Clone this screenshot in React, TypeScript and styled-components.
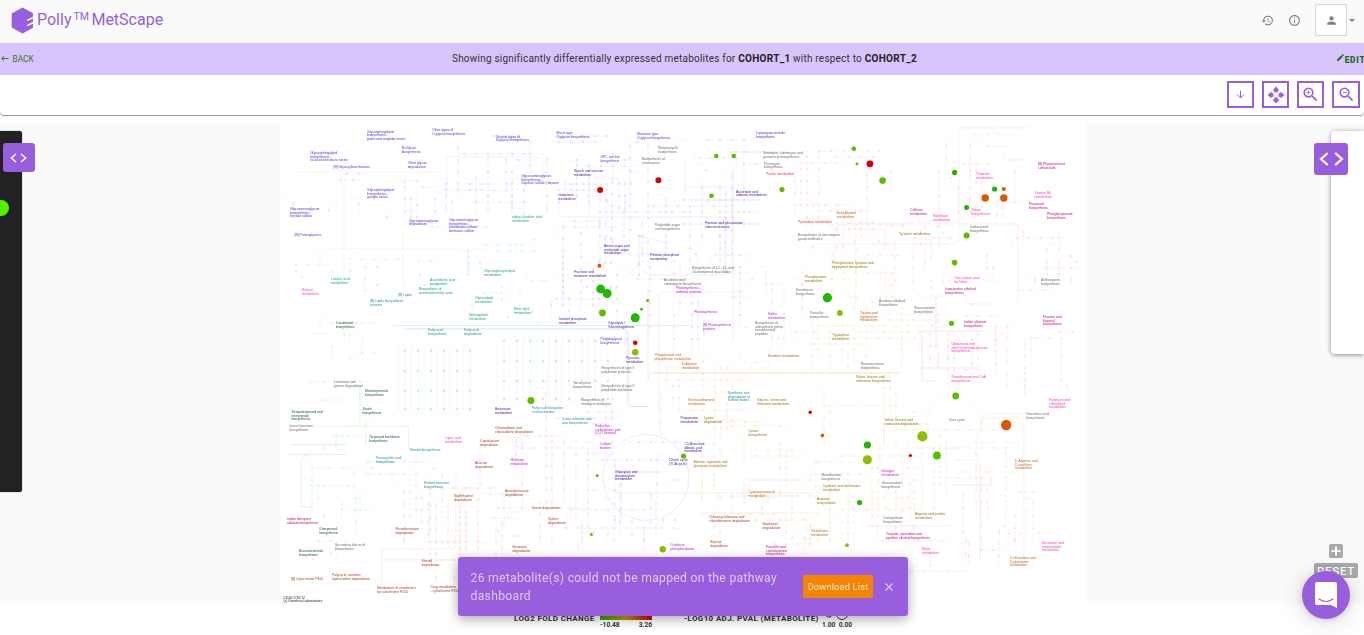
import React from 'react';
import styled, { createGlobalStyle } from 'styled-components';

const GlobalStyle = createGlobalStyle`
  * { box-sizing: border-box; }
  html, body { margin: 0; padding: 0; overflow: hidden; }
  body { font-family: Roboto, "Liberation Sans", sans-serif; background: #fff; color: #333; }
`;

const purple = '#985edd';

const Page = styled.div`
  position: relative;
  display: flex;
  flex-direction: column;
  width: 100%;
  height: 635px;
  overflow: hidden;
  background: #fff;
`;

const Header = styled.header`
  display: flex;
  align-items: center;
  height: 43px;
  padding: 0 9px 0 11px;
  background: #fafafa;
`;

const Brand = styled.div`
  display: flex;
  align-items: center;
  flex: 1;
  gap: 3px;
  padding-bottom: 2px;
  color: ${purple};
  font-size: 16px;
  line-height: 20px;
`;

const BrandName = styled.span`
  display: flex;
  align-items: flex-start;
  white-space: nowrap;
  padding-bottom: 1px;
`;

const TradeMark = styled.span`
  margin: 0 2.5px 0 2px;
  font-size: 10.5px;
  line-height: 13px;
`;

const HeaderActions = styled.div`
  display: flex;
  align-items: center;
  padding-bottom: 3px;
  color: #808080;
`;

const IconSlot = styled.span<{ $gap: number }>`
  display: flex;
  margin-right: ${(p) => p.$gap}px;
`;

const Avatar = styled.div`
  display: flex;
  align-items: center;
  justify-content: center;
  width: 32px;
  height: 32px;
  border: 1px solid #d8d8d8;
  background: #fff;
`;

const Caret = styled.span`
  margin-left: 2px;
  border: 3px solid transparent;
  border-top-color: #808080;
  border-bottom: 0;
`;

const Banner = styled.div`
  display: grid;
  grid-template-columns: 100px 1fr 95px;
  align-items: center;
  height: 32px;
  padding-bottom: 1px;
  background: #d7c4fa;
`;

const BannerLink = styled.span<{ $strong?: boolean }>`
  display: flex;
  align-items: ${(p) => (p.$strong ? 'flex-start' : 'center')};
  gap: ${(p) => (p.$strong ? 0 : 3.5)}px;
  justify-self: ${(p) => (p.$strong ? 'end' : 'start')};
  margin-right: ${(p) => (p.$strong ? -1.5 : 0)}px;
  color: ${(p) => (p.$strong ? '#1f6b1f' : '#2f7a30')};
  font-size: ${(p) => (p.$strong ? 8.3 : 8.3)}px;
  font-weight: ${(p) => (p.$strong ? 900 : 400)};
  letter-spacing: ${(p) => (p.$strong ? 0.8 : 0)}px;
`;

const EditLabel = styled.span`
  padding-top: 2px;
`;

const BannerText = styled.div`
  text-align: center;
  font-size: 10px;
  letter-spacing: 0.21px;
  color: #333;
  b { font-weight: 700; color: #222; letter-spacing: 0.3px; }
`;

const Toolbar = styled.div`
  display: flex;
  justify-content: flex-end;
  gap: 8px;
  height: 40px;
  padding: 6px 4px 0 0;
  background: #fff;
  border-radius: 0 0 4px 4px;
  box-shadow: 0 1px 1px rgba(0, 0, 0, 0.42);
`;

const ToolButton = styled.button`
  display: flex;
  align-items: center;
  justify-content: center;
  width: 27px;
  height: 27px;
  padding: 0;
  border: 2px solid ${purple};
  background: #fff;
  color: ${purple};
  &:last-child { width: 28px; }
`;

const Workspace = styled.main`
  display: flex;
  height: 480px;
  margin-top: 8px;
  padding-top: 8px;
  background: #fafafa;
`;

const MapPane = styled.div`
  width: 806px;
  height: 480px;
  margin: -8px 0 0 258px;
  background: #fff;
  svg { display: block; }
`;

const LeftPanel = styled.aside`
  position: relative;
  width: 22px;
  height: 361px;
  border-radius: 0 3px 3px 0;
  background: #222;
  box-shadow: 0 0 1px #000;
`;

const RightPanel = styled.aside`
  position: relative;
  width: 33px;
  height: 223px;
  margin-left: auto;
  border-radius: 4px 0 0 4px;
  background: #fff;
  box-shadow: 0 1px 5px rgba(0, 0, 0, 0.45);
`;

const PanelToggle = styled.button<{ $left: number; $w: number; $h: number }>`
  position: absolute;
  top: 12px;
  left: ${(p) => p.$left}px;
  display: flex;
  align-items: center;
  justify-content: center;
  width: ${(p) => p.$w}px;
  height: ${(p) => p.$h}px;
  padding: 0;
  border: 0;
  border-radius: 3px;
  background: ${purple};
  color: #fff;
`;

const SliderThumb = styled.span`
  position: absolute;
  top: 69px;
  left: -7px;
  width: 16px;
  height: 16px;
  border-radius: 50%;
  background: #55f000;
`;

const Legend = styled.footer`
  display: flex;
  align-items: flex-start;
  height: 32px;
  padding: 9px 0 0 514px;
  font-size: 8px;
  font-weight: 700;
  color: #333;
  letter-spacing: 0.36px;
  white-space: nowrap;
`;

const LegendTitle = styled.span<{ $w: number }>`
  width: ${(p) => p.$w}px;
  padding-top: 1px;
  line-height: 11px;
`;

const ScaleGroup = styled.div<{ $gap: number }>`
  width: 52px;
  margin-right: ${(p) => p.$gap}px;
`;

const GradientBar = styled.div`
  height: 8px;
  background: linear-gradient(90deg, #1fae00, #b8a000 50%, #d80000);
`;

const ScaleLabels = styled.div`
  display: flex;
  justify-content: space-between;
  margin-top: 1px;
  font-size: 6.6px;
  line-height: 9px;
  letter-spacing: 0;
`;

const SizeScale = styled.div`
  width: 30px;
  margin-left: 2px;
  svg { display: block; }
`;

const Toast = styled.div`
  position: absolute;
  left: 458px;
  top: 557px;
  display: flex;
  align-items: center;
  width: 450px;
  height: 59px;
  padding: 0 15px 0 12.5px;
  border-radius: 3px;
  background: ${purple};
  box-shadow: 0 3px 12px rgba(0, 0, 0, 0.35);
`;

const ToastText = styled.div`
  flex: 1;
  color: #ddccf6;
  font-size: 12.2px;
  line-height: 18px;
  letter-spacing: 0.28px;
`;

const DownloadButton = styled.button`
  width: 70px;
  height: 23px;
  margin-right: 12px;
  padding: 0;
  border: 0;
  background: #f58400;
  color: #fbeedd;
  font: 400 9.2px Roboto, sans-serif;
  letter-spacing: 0.2px;
`;

const MapControls = styled.div`
  position: absolute;
  top: 544px;
  right: 6px;
  display: flex;
  flex-direction: column;
  align-items: center;
  gap: 5px;
`;

const ZoomIn = styled.span`
  display: flex;
  width: 14px;
  height: 14px;
  border-radius: 2px;
  background: #a9a9a9;
`;

const ResetButton = styled.span`
  width: 44px;
  height: 15px;
  border-radius: 2px;
  background: #a9a9a9;
  color: #fff;
  font: 500 11.5px/16px Roboto, sans-serif;
  letter-spacing: 0.7px;
  text-align: center;
`;

const ChatButton = styled.button`
  position: absolute;
  left: 1302px;
  top: 571px;
  width: 48px;
  height: 48px;
  padding: 0;
  border: 0;
  border-radius: 50%;
  background: ${purple};
  box-shadow: 0 1px 6px rgba(0, 0, 0, 0.12), 0 2px 24px rgba(0, 0, 0, 0.16);
  svg { display: block; }
`;

const MapText = styled.text`
  font-family: "Liberation Sans", Arial, sans-serif;
  font-size: 3.4px;
`;

/* ---- pathway map data ---- */

const tone = {
  v: '#5a30d8', p: '#48149c', y: '#707070', g: '#1fa873', t: '#1f97a0', d: '#1c5730',
  b: '#a84426', o: '#c4691c', k: '#9a7418', f: '#f93fae', m: '#bb22d4', h: '#c2146f', r: '#f52f42', n: '#222222',
};
type Tone = keyof typeof tone;
type Label = [number, number, Tone, string];

const labels: Label[] = [
  [367, 131.7, 'v', 'Glycosphingolipid|biosynthesis -|globo and isoglobo series'],
  [432, 130, 'v', 'Other types of|O-glycan biosynthesis'],
  [401.7, 148, 'v', 'N-Glycan|biosynthesis'],
  [496, 136.5, 'v', 'Various types of|N-glycan biosynthesis'],
  [310.5, 153, 'v', 'Glycosphingolipid|biosynthesis -|lacto and neolacto series'],
  [333.5, 166.7, 'v', '[B] Glycosyltransferases'],
  [407.7, 163, 'v', 'Other glycan|degradation'],
  [367, 190, 'v', 'Glycosphingolipid|biosynthesis -|ganglio series'],
  [521.5, 176, 'v', 'Glycosaminoglycan|biosynthesis -|heparan sulfate / heparin'],
  [290, 209, 'v', 'Glycosaminoglycan|biosynthesis -|keratan sulfate'],
  [409, 220.5, 'v', 'Glycosaminoglycan|degradation'],
  [449, 220, 'v', 'Glycosaminoglycan|biosynthesis -|chondroitin sulfate /|dermatan sulfate'],
  [294.5, 235, 'v', '[B] Proteoglycans'],
  [512, 216.8, 'g', 'alpha-Linolenic acid|metabolism'],
  [331, 279, 'g', 'Linoleic acid|metabolism'],
  [430, 280, 'g', 'Arachidonic acid|metabolism'],
  [484, 271, 'g', 'Glycerophospholipid|metabolism'],
  [556.3, 132.8, 'v', 'Mucin type|O-glycan biosynthesis'],
  [637, 133.8, 'v', 'Mannose type|O-glycan biosynthesis'],
  [756, 132.8, 'v', 'Lipopolysaccharide|biosynthesis'],
  [658, 148, 'y', 'Streptomycin|biosynthesis'],
  [600.5, 157, 'v', 'GPI - anchor|biosynthesis'],
  [642, 159, 'y', 'Biosynthesis of|ansamycins'],
  [763, 153, 'y', 'Neomycin, kanamycin and|gentamicin biosynthesis'],
  [764, 163.5, 'y', 'Puromycin|biosynthesis'],
  [574, 171, 'p', 'Starch and sucrose|metabolism'],
  [766, 173.7, 'r', 'Purine metabolism'],
  [558.3, 195, 'p', 'Galactose|metabolism'],
  [736, 191.7, 'p', 'Ascorbate and|aldarate metabolism'],
  [655, 225, 'y', 'Polyketide sugar|unit biosynthesis'],
  [705, 223, 'p', 'Pentose and glucuronate|interconversions'],
  [798, 222, 'r', 'Pyrimidine metabolism'],
  [798, 235, 'y', 'Biosynthesis of vancomycin|group antibiotics'],
  [604, 246, 'p', 'Amino sugar and|nucleotide sugar|metabolism'],
  [650, 255, 'p', 'Pentose phosphate|metabolism'],
  [692, 268, 'y', 'Biosynthesis of 12-, 14- and|16-membered macrolides'],
  [574, 272, 'p', 'Fructose and|mannose metabolism'],
  [664, 280, 'y', 'Acarbose and|validamycin biosynthesis'],
  [1038, 164, 'h', '[B] Phytochemical|compounds'],
  [976, 174, 'f', 'Thiamine|metabolism'],
  [1034.5, 193, 'f', 'Vitamin B6|metabolism'],
  [1029, 204, 'h', 'Flavonoid|biosynthesis'],
  [1047, 214, 'h', 'Phenylpropanoid|biosynthesis'],
  [971.5, 210, 'f', 'Folate|biosynthesis'],
  [910, 210, 'h', 'Caffeine|metabolism'],
  [933, 216, 'f', 'Riboflavin|metabolism'],
  [837, 213, 'o', 'beta-Alanine|metabolism'],
  [970, 227, 'y', 'Isoflavonoid|biosynthesis'],
  [899, 234, 'k', 'Tyrosine metabolism'],
  [832, 263, 'k', 'Phenylalanine, tyrosine and|tryptophan biosynthesis'],
  [805, 277, 'k', 'Phenylalanine|metabolism'],
  [954.5, 278, 'f', 'One carbon pool|by folate'],
  [1041, 280, 'y', 'Anthocyanin|biosynthesis'],
  [302, 290, 'f', 'Retinol|metabolism'],
  [398, 295, 't', '[B] Lipids'],
  [370, 301, 't', '[B] Lipids biosynthesis|proteins'],
  [418.7, 289, 'g', 'Biosynthesis of|unsaturated fatty acids'],
  [475, 298, 'g', 'Glycerolipid|metabolism'],
  [514, 309, 'g', 'Ether lipid|metabolism'],
  [469, 315, 'g', 'Sphingolipid|metabolism'],
  [336, 323, 'd', 'Carotenoid|biosynthesis'],
  [428, 330, 't', 'Fatty acid|biosynthesis'],
  [464, 330, 't', 'Fatty acid|degradation'],
  [334, 382, 'y', 'Limonene and|pinene degradation'],
  [365, 391, 'd', 'Monoterpenoid|biosynthesis'],
  [362.5, 409, 'd', 'Zeatin|biosynthesis'],
  [291.5, 412, 'd', 'Sesquiterpenoid and|triterpenoid|biosynthesis'],
  [289.5, 426, 'y', 'Insect hormone|biosynthesis'],
  [369, 437, 'd', 'Terpenoid backbone|biosynthesis'],
  [445, 438, 'f', 'Lipoic acid|metabolism'],
  [410, 450, 't', 'Steroid biosynthesis'],
  [495, 409, 'p', 'Butanoate|metabolism'],
  [532, 408, 't', 'Fatty acid elongation|in mitochondria'],
  [495, 428, 'b', 'Chloroalkane and|chloroalkene degradation'],
  [480, 441, 'b', 'Caprolactam|degradation'],
  [676, 288, 'm', 'Photosynthesis -|antenna proteins'],
  [796, 290, 'y', 'Novobiocin|biosynthesis'],
  [694, 312, 'm', 'Photosynthesis'],
  [768, 314, 'm', 'Sulfur|metabolism'],
  [703, 325, 'm', '[B] Photosynthesis|proteins'],
  [755, 323, 'y', 'Biosynthesis of|siderophore group|nonribosomal|peptides'],
  [559, 319, 'p', 'Inositol phosphate|metabolism'],
  [608, 323, 'p', 'Glycolysis /|Gluconeogenesis'],
  [600.5, 339, 'v', 'Peptidoglycan|biosynthesis'],
  [626, 358, 'p', 'Pyruvate|metabolism'],
  [654.5, 355, 'o', 'Phosphonate and|phosphinate metabolism'],
  [682, 364, 'o', 'D-Alanine|metabolism'],
  [601.5, 368, 'y', 'Biosynthesis of type II|polyketide products'],
  [573, 383, 'y', 'Tetracycline|biosynthesis'],
  [601.5, 386, 'y', 'Biosynthesis of type II|polyketide backbone'],
  [581.5, 400, 'y', 'Biosynthesis of|enediyne antibiotics'],
  [688, 400, 'o', 'Selenocompound|metabolism'],
  [728, 393, 't', 'Synthesis and|degradation of|Ketone bodies'],
  [757, 400, 'k', 'Glycine, serine and|threonine metabolism'],
  [768, 356, 'k', 'Histidine metabolism'],
  [562, 419, 't', 'Cutin, suberine and|wax biosynthesis'],
  [680.5, 418, 'p', 'Propanoate|metabolism'],
  [704, 418, 'k', 'Lysine|degradation'],
  [595, 426, 'm', 'Reductive|carboxylate cycle|(CO2 fixation)'],
  [748.5, 431, 'k', 'Lysine|biosynthesis'],
  [600, 444, 'm', 'Carbon|fixation'],
  [684.5, 444, 'p', 'C5-Branched|dibasic acid|metabolism'],
  [945, 289, 'h', 'Isoquinoline alkaloid|biosynthesis'],
  [879, 301, 'y', 'Acridone alkaloid|biosynthesis'],
  [914, 308, 'y', 'Staurosporine|biosynthesis'],
  [810, 313, 'y', 'Penicillin|biosynthesis'],
  [860, 313, 'o', 'Taurine and|hypotaurine|metabolism'],
  [964, 322, 'h', 'Indole alkaloid|biosynthesis'],
  [1043, 317, 'h', 'Flavone and|flavonol|biosynthesis'],
  [832, 335, 'k', 'Tryptophan|metabolism'],
  [951.5, 344, 'f', 'Ubiquinone and|other terpenoid-quinone|biosynthesis'],
  [861, 364, 'y', 'Benzoxazinone|biosynthesis'],
  [856, 377, 'k', 'Valine, leucine and|isoleucine biosynthesis'],
  [951.5, 377, 'f', 'Pantothenate and CoA|biosynthesis'],
  [1049, 400, 'f', 'Porphyrin and|chlorophyll|metabolism'],
  [884.5, 420, 'k', 'Valine, leucine and|isoleucine degradation'],
  [949, 420, 'y', 'Urea cycle'],
  [1026, 414, 'y', 'Clavulanic acid|biosynthesis'],
  [376, 458, 't', 'Primary bile acid|biosynthesis'],
  [424, 483, 't', 'Steroid hormone|biosynthesis'],
  [475, 463, 'b', 'Atrazine|degradation'],
  [510.5, 460, 'm', 'Methane|metabolism'],
  [505, 491, 'b', 'Aminobenzoate|degradation'],
  [454, 496, 'b', 'Naphthalene|degradation'],
  [532, 508, 'b', 'Dioxin degradation'],
  [287, 519, 'h', 'Indole diterpene|alkaloid biosynthesis'],
  [319.5, 529, 'd', 'Diterpenoid|biosynthesis'],
  [395.5, 529, 'b', 'Fluorobenzoate|degradation'],
  [335, 545, 'y', 'Secondary bile acid|biosynthesis'],
  [299, 551, 'd', 'Brassinosteroid|biosynthesis'],
  [512.5, 547, 'b', 'Benzoate|degradation'],
  [421.5, 561, 'b', 'Steroid|degradation'],
  [291, 579, 'b', '[B] Cytochrome P450'],
  [332, 575, 'b', 'Polycyclic aromatic|hydrocarbon degradation'],
  [377, 588, 'b', 'Metabolism of xenobiotics|by cytochrome P450'],
  [430.5, 587, 'b', 'Drug metabolism|- cytochrome P450'],
  [283.5, 597.5, 'n', '01100 7/10/12|(c) Kanehisa Laboratories'],
  [615, 472, 'p', 'Glyoxylate and|dicarboxylate|metabolism'],
  [669, 460, 'p', 'Citrate cycle|(TCA cycle)'],
  [693.5, 462, 'k', 'Alanine, aspartate and|glutamate metabolism'],
  [748.5, 492, 'o', 'Cyanoamino acid|metabolism'],
  [548, 519, 'b', 'Xylene|degradation'],
  [709, 517, 'b', 'Chlorocyclohexane and|chlorobenzene degradation'],
  [762.5, 524, 'b', 'Bisphenol|degradation'],
  [811, 531, 'o', 'Glutathione|metabolism'],
  [670.5, 545, 'm', 'Oxidative|phosphorylation'],
  [710, 542, 'b', 'Styrene|degradation'],
  [766, 547, 'h', 'Penicillin and|cephalosporin|biosynthesis'],
  [881.5, 471, 'm', 'Nitrogen|metabolism'],
  [821.5, 475, 'y', 'Monobactam|biosynthesis'],
  [881.5, 483, 'y', 'Glucosinolate|biosynthesis'],
  [823, 486, 'k', 'Cysteine and methionine|metabolism'],
  [817, 499, 'k', 'Arginine|biosynthesis'],
  [883, 518, 'y', 'Carbapenem|biosynthesis'],
  [915, 514, 'k', 'Arginine and proline|metabolism'],
  [886, 534, 'h', 'Tropane, piperidine and|pyridine alkaloid biosynthesis'],
  [922, 549, 'f', 'Biotin|metabolism'],
  [1015, 461, 'o', 'D-Arginine and|D-ornithine|metabolism'],
  [1042, 543, 'f', 'Nicotinate and|nicotinamide|metabolism'],
  [1010, 558, 'o', 'D-Glutamine and|D-glutamate|metabolism'],
];

/* measured metabolites: x, y, radius, fill */
const metabolites: [number, number, number, string][] = [
  [716.3, 156, 2.3, '#5bbd00'], [733.7, 156, 2.3, '#5bbd00'], [658.4, 180.3, 3, '#d80000'],
  [600.1, 190, 3, '#d80000'], [711.5, 195.8, 2.4, '#5bbd00'], [782, 189.5, 2.6, '#5bbd00'],
  [599.4, 265.8, 2, '#d85a00'], [853.8, 148.8, 2.3, '#5bbd00'], [857, 163.8, 1.6, '#8abf00'],
  [870, 163.8, 3.4, '#d80000'], [882.6, 180.6, 3.3, '#5bbd00'], [954.6, 172.4, 2.6, '#1fb800'],
  [994.6, 189, 2.6, '#1fb800'], [1003.8, 189, 2.1, '#d85a00'], [985.2, 198, 3.7, '#d85a00'],
  [1003.8, 198, 3.7, '#d85a00'], [966.6, 207.6, 2.5, '#1fb800'], [966.6, 235.6, 3, '#5bbd00'],
  [954.6, 262.6, 2.8, '#5bbd00'], [600.6, 289, 4.4, '#1fb800'], [607.1, 293.5, 4.5, '#1fb800'],
  [602.5, 313, 3.4, '#5bbd00'], [647.6, 300.6, 1.5, '#5bbd00'], [641.5, 309.3, 1.5, '#5bbd00'],
  [635.2, 317.7, 4.5, '#1fb800'], [635.2, 342.8, 2.3, '#d80000'], [635.2, 352.3, 3.2, '#8abf00'],
  [530.9, 400.4, 3.5, '#5bbd00'], [827.4, 297.7, 4.6, '#1fb800'], [839.9, 313, 2.9, '#8abf00'],
  [951.5, 323.3, 2.6, '#5bbd00'], [955.7, 396, 3.4, '#5bbd00'], [810.2, 412.2, 1.7, '#d80000'],
  [822.4, 435.4, 1.8, '#d85a00'], [922.4, 436.4, 5.1, '#8abf00'], [1006.2, 425, 5.2, '#d85a00'],
  [867.4, 445, 3.6, '#1fb800'], [867.4, 459.8, 4.5, '#8abf00'], [910.4, 455.5, 1.6, '#d80000'],
  [936.9, 455.5, 3.9, '#5bbd00'], [859.6, 502.5, 2.6, '#1fb800'], [683.5, 456, 2.6, '#5bbd00'],
  [597.2, 475.5, 1.5, '#5bbd00'], [591.4, 534.4, 1.6, '#8abf00'], [662.7, 549.2, 3.2, '#8abf00'],
  [847, 545.2, 1.9, '#8abf00'],
];

/* faint lattice regions: x, y, width, height, number of runs, colour */
const regions: [number, number, number, number, number, string][] = [
  [293, 150, 75, 70, 7, '#c9d0fb'], [375, 145, 65, 78, 8, '#c9d0fb'], [440, 130, 95, 85, 17, '#c9d0fb'],
  [535, 130, 105, 85, 20, '#ccd2fb'], [545, 215, 75, 105, 16, '#d3cdfb'], [600, 140, 160, 130, 30, '#d9c8f8'],
  [640, 128, 150, 40, 8, '#c9d0fb'], [290, 235, 130, 45, 8, '#bfeeda'], [420, 215, 120, 60, 12, '#bfeeda'],
  [460, 275, 90, 45, 9, '#bfeeda'], [365, 255, 80, 35, 7, '#bfe8ea'], [620, 255, 130, 100, 16, '#e4ccf7'],
  [765, 145, 120, 110, 20, '#fbcfd4'], [885, 160, 65, 90, 11, '#fbcde0'], [940, 128, 70, 90, 11, '#fbcde4'],
  [985, 160, 45, 60, 6, '#fbcde4'], [975, 220, 105, 65, 12, '#fac8dc'], [790, 225, 110, 80, 17, '#f8e6b8'],
  [895, 215, 60, 75, 11, '#fadadf'], [770, 290, 180, 85, 26, '#f9e4bb'], [930, 280, 70, 105, 15, '#facbe0'],
  [995, 290, 80, 105, 12, '#fad3e6'], [302, 305, 80, 55, 9, '#cbf0cb'], [300, 370, 80, 80, 12, '#cbf0cb'],
  [300, 450, 80, 70, 11, '#ccefce'], [295, 535, 50, 28, 4, '#c5f0c8'], [350, 450, 85, 95, 12, '#bfe8e6'],
  [400, 470, 120, 115, 24, '#f4cfc5'], [480, 430, 115, 115, 24, '#f2d0d8'], [540, 370, 90, 90, 11, '#e6d1f3'],
  [585, 430, 100, 95, 12, '#d8cdf6'], [655, 350, 115, 90, 19, '#f8dfc8'], [690, 420, 135, 85, 21, '#f9dfbd'],
  [690, 490, 130, 65, 14, '#f6cfc8'], [800, 370, 130, 80, 19, '#f9e4bb'], [800, 450, 120, 100, 23, '#f9e0b5'],
  [880, 430, 140, 90, 17, '#f9dfc8'], [945, 460, 60, 105, 9, '#facbe0'], [985, 480, 60, 70, 8, '#fad3e6'],
  [560, 480, 120, 70, 14, '#ead0f3'], [870, 535, 110, 40, 7, '#fad3d8'], [760, 260, 60, 90, 8, '#ecd2f5'],
];

const makeRandom = (seed: number) => {
  let s = seed;
  return () => {
    s = (s * 16807) % 2147483647;
    return s / 2147483647;
  };
};

const Lattice = () => {
  const rnd = makeRandom(4271);
  return (
    <g strokeWidth={0.5} fill="none">
      {regions.map(([x, y, w, h, n, color], i) => (
        <g key={i} stroke={color}>
          {Array.from({ length: n }, (_, j) => {
            const vertical = j % 5 < 3;
            const x0 = x + Math.round((rnd() * w * 0.95) / 6) * 6;
            const y0 = y + Math.round((rnd() * h * 0.9) / 6) * 6;
            const len = (vertical ? h : w) * (0.3 + rnd() * 0.55);
            const x1 = vertical ? x0 : Math.min(x + w, x0 + len);
            const y1 = vertical ? Math.min(y + h, y0 + len) : y0;
            const turn = rnd() > 0.45 ? (rnd() > 0.5 ? 10 : -10) : 0;
            const d = vertical
              ? `M${x0 + turn} ${y0}Q${x0} ${y0} ${x0} ${y0 + 4}V${y1}`
              : `M${x0} ${y0 + turn}Q${x0} ${y0} ${x0 + 4} ${y0}H${x1}`;
            const span = vertical ? y1 - y0 : x1 - x0;
            const count = Math.max(1, Math.floor(span / 12));
            return (
              <g key={j}>
                <path d={d} opacity={0.5} />
                {Array.from({ length: count }, (_, k) => (
                  <circle
                    key={k}
                    cx={vertical ? x0 : x0 + 6 + k * 12}
                    cy={vertical ? y0 + 6 + k * 12 : y0}
                    r={1.2}
                    fill={color}
                    stroke="none"
                    opacity={0.75}
                  />
                ))}
              </g>
            );
          })}
        </g>
      ))}
    </g>
  );
};

/* the fatty acid chains: evenly spaced looped columns */
const Chains = ({ x, y, n, step, bottom }: { x: number; y: number; n: number; step: number; bottom: number }) => (
  <g stroke="#bfe6e2" fill="none" strokeWidth={0.5}>
    {Array.from({ length: n }, (_, i) => {
      const cx = x + i * step;
      return (
        <g key={i}>
          <path d={`M${cx} ${bottom}V${y + 5}Q${cx} ${y} ${cx - 4} ${y}Q${cx - 7} ${y} ${cx - 7} ${y + 5}V${bottom - 5}Q${cx - 8} ${bottom} ${cx - 13} ${bottom}`} opacity={0.6} />
          {[6, 26, 46, 64].map((dy) => (
            <circle key={dy} cx={cx} cy={y + dy} r={1.2} fill="#b4e0dc" stroke="none" />
          ))}
        </g>
      );
    })}
  </g>
);

const PathwayMap = () => (
  <svg width="806" height="480" viewBox="280 123 806 480">
    <g opacity={0.66}>
      <Lattice />
      <Chains x={405} y={345} n={6} step={13} bottom={415} />
      <Chains x={504} y={335} n={9} step={13} bottom={404} />
    </g>
    <g fill="none" strokeWidth={0.6} opacity={0.75}>
      <path d="M393 325.500H690" stroke="#c4eadf" strokeWidth={0.8} />
      <path d="M405 329H622Q628 329 628 335V401Q628 406.500 633 406.500H648" stroke="#9ccfd8" />
      <path d="M648 381V378Q648 373 654 373H900" stroke="#f5d596" strokeWidth={0.9} />
      <path d="M648 285V375M659 430V296Q659 292 664 292H745M733 340V168M685 160V192Q685 187 690 187H725" stroke="#e3d5f5" />
      <path d="M639 236V275M639 236L668 243M628 275L639 264L648 275H725V216M561 217H726" stroke="#e0d2f5" />
      <path d="M447 157H535Q543 157 543 165V187M447 157V200" stroke="#e2e6fc" />
      <path d="M470 275V255Q470 249 476 249H485M324 249H460M403 230V285M344 160V280M293 172H440" stroke="#d8f3e8" />
      <circle cx={646} cy={477.500} r={43} stroke="#ddd6f8" strokeWidth={0.7} />
      <circle cx={954} cy={422} r={27} stroke="#f9ecd0" />
      <circle cx={517} cy={442} r={5} stroke="#efd0f3" />
      <path d="M290 444.500H346M289 454.500H346M330 334H311M360 426V385M320 426H408Q409 440 409 450" stroke="#c4ecc0" strokeWidth={0.7} />
      <path d="M301 507V461Q302 455 309 455M301 507H313" stroke="#f5c4da" />
      <path d="M605 486Q612 493 622 493H820M700 513H820" stroke="#f8e6c4" strokeWidth={0.8} />
      <path d="M834 262V232Q835 224 842 224H1018V300M815 244H950Q959 244 959 236V128H1030" stroke="#f8dce4" />
      <path d="M922 331H982M922 368H982M922 331V381H938M938 368V358" stroke="#f8c8dc" />
      <path d="M982 425Q983 418 990 418H1016Q1024 418 1024 426V570M955 460H975Q980 460 980 466V560" stroke="#f9dfc0" />
      <path d="M981 425Q982 414 990 414H1026" stroke="#e0e0e0" />
      <path d="M952 485H991V477M867 526H952" stroke="#f8c8d8" />
      <path d="M382 549H450Q456 549 456 543V470M382 549V585M382 560H455" stroke="#f7ddd4" />
    </g>
    {[236, 264, 275].map((y) => (
      <circle key={y} cx={639} cy={y} r={1.100} fill="#e2d3f5" />
    ))}
    {labels.map(([x, y, c, text], i) => (
      <MapText key={i} x={x} y={y + 1.2} fill={tone[c]}>
        {text.split('|').map((line, j) => (
          <tspan key={j} x={x} dy={j ? 3.5 : 0}>{line}</tspan>
        ))}
      </MapText>
    ))}
    {metabolites.map(([x, y, r, fill], i) => (
      <circle key={i} cx={x} cy={y} r={r} fill={fill} />
    ))}
  </svg>
);

/* ---- icons ---- */

const Logo = () => (
  <svg width="23" height="27" viewBox="0 0 23 27">
    <path d="M11.500 0.500L22 6.300V9.700L15.800 12.800L16.300 14L22 11.500V14.700L15.800 18L16.300 19.300L22 16.800V20.800L11.500 26.500L0.700 20.500V6.500Z" fill={purple} />
  </svg>
);

const MaterialIcon = ({ d, size }: { d: string; size: number }) => (
  <svg width={size} height={size} viewBox="0 0 24 24" fill="currentColor"><path d={d} /></svg>
);

const paths = {
  history: 'M13 3a9 9 0 0 0-9 9H1l3.890 3.890.070.140L9 12H6c0-3.870 3.130-7 7-7s7 3.130 7 7-3.130 7-7 7c-1.930 0-3.680-.790-4.940-2.060l-1.420 1.420A8.954 8.954 0 0 0 13 21a9 9 0 0 0 0-18zm-1 5v5l4.280 2.540.720-1.210-3.500-2.080V8H12z',
  info: 'M11 17h2v-6h-2v6zm1-15C6.480 2 2 6.480 2 12s4.480 10 10 10 10-4.480 10-10S17.520 2 12 2zm0 18c-4.410 0-8-3.590-8-8s3.590-8 8-8 8 3.590 8 8-3.590 8-8 8zM11 9h2V7h-2v2z',
  person: 'M12 12c2.210 0 4-1.790 4-4s-1.790-4-4-4-4 1.790-4 4 1.790 4 4 4zm0 2c-2.670 0-8 1.340-8 4v2h16v-2c0-2.660-5.330-4-8-4z',
  zoomIn: 'M15.500 14h-.790l-.280-.270A6.471 6.471 0 0 0 16 9.500 6.500 6.500 0 1 0 9.500 16c1.610 0 3.090-.590 4.230-1.570l.270.280v.790l5 4.990L20.490 19l-4.990-5zm-6 0C7.010 14 5 11.990 5 9.500S7.010 5 9.500 5 14 7.010 14 9.500 11.990 14 9.500 14zm2.500-4h-2v2H9v-2H7V9h2V7h1v2h2v1z',
  zoomOut: 'M15.500 14h-.790l-.280-.270A6.471 6.471 0 0 0 16 9.500 6.500 6.500 0 1 0 9.500 16c1.610 0 3.090-.590 4.230-1.570l.270.280v.790l5 4.990L20.490 19l-4.990-5zm-6 0C7.010 14 5 11.990 5 9.500S7.010 5 9.500 5 14 7.010 14 9.500 11.990 14 9.500 14zM7 9h5v1H7z',
  edit: 'M3 17.250V21h3.750L17.810 9.940l-3.750-3.750L3 17.250zM20.710 7.040a.996.996 0 0 0 0-1.410l-2.340-2.340a.996.996 0 0 0-1.410 0l-1.830 1.830 3.750 3.750 1.830-1.830z',
};

const Brackets = ({ w, h, stroke }: { w: number; h: number; stroke: number }) => (
  <svg width={w} height={h} viewBox={`0 0 ${w} ${h}`} fill="none" stroke="currentColor" strokeWidth={stroke}>
    <path d={`M${w * 0.35} 1L${w * 0.08} ${h / 2}L${w * 0.35} ${h - 1}M${w * 0.65} 1L${w * 0.92} ${h / 2}L${w * 0.65} ${h - 1}`} />
  </svg>
);

const App = () => (
  <Page>
    <GlobalStyle />
    <Header>
      <Brand>
        <Logo />
        <BrandName>Polly<TradeMark>TM</TradeMark>MetScape</BrandName>
      </Brand>
      <HeaderActions>
        <IconSlot $gap={14.5}><MaterialIcon d={paths.history} size={13} /></IconSlot>
        <IconSlot $gap={14}><MaterialIcon d={paths.info} size={13} /></IconSlot>
        <Avatar><MaterialIcon d={paths.person} size={13} /></Avatar>
        <Caret />
      </HeaderActions>
    </Header>
    <Banner>
      <BannerLink>
        <svg width="9" height="7" viewBox="0 0 9 7" fill="none" stroke="currentColor" strokeWidth="1"><path d="M8.500 3.500H2M4 1.200L1.700 3.500L4 5.800" /></svg>
        BACK
      </BannerLink>
      <BannerText>
        Showing significantly differentially expressed metabolites for <b>COHORT_1</b> with respect to <b>COHORT_2</b>
      </BannerText>
      <BannerLink $strong>
        <MaterialIcon d={paths.edit} size={9} />
        <EditLabel>EDIT</EditLabel>
      </BannerLink>
    </Banner>
    <Toolbar>
      <ToolButton>
        <svg width="9" height="9" viewBox="0 0 9 9" fill="none" stroke="currentColor"><path d="M4.500 0.500V8M1 4.500L4.500 8L8 4.500" /></svg>
      </ToolButton>
      <ToolButton>
        <svg width="18" height="18" viewBox="0 0 18 18" fill="currentColor">
          <path d="M9 0.500L12.500 4.500H10.800V6.500H7.200V4.500H5.500ZM9 17.500L5.500 13.500H7.200V11.500H10.800V13.500H12.500ZM0.500 9L4.500 5.500V7.200H6.500V10.800H4.500V12.500ZM17.500 9L13.500 12.500V10.800H11.500V7.200H13.500V5.500Z" />
        </svg>
      </ToolButton>
      <ToolButton><MaterialIcon d={paths.zoomIn} size={19} /></ToolButton>
      <ToolButton><MaterialIcon d={paths.zoomOut} size={19} /></ToolButton>
    </Toolbar>
    <Workspace>
      <LeftPanel>
        <PanelToggle $left={2.5} $w={32} $h={29}><Brackets w={17} h={10} stroke={1.5} /></PanelToggle>
        <SliderThumb />
      </LeftPanel>
      <MapPane><PathwayMap /></MapPane>
      <RightPanel>
        <PanelToggle $left={-17} $w={34} $h={32}><Brackets w={25} h={14} stroke={2.2} /></PanelToggle>
      </RightPanel>
    </Workspace>
    <Legend>
      <LegendTitle $w={86}>LOG2 FOLD CHANGE</LegendTitle>
      <ScaleGroup $gap={32}>
        <GradientBar />
        <ScaleLabels><span>-10.48</span><span>3.26</span></ScaleLabels>
      </ScaleGroup>
      <LegendTitle $w={136}>-LOG10 ADJ. PVAL (METABOLITE)</LegendTitle>
      <SizeScale>
        <svg width="30" height="8" viewBox="0 0 30 8" fill="#fff" stroke="#333"><circle cx="7" cy="2.500" r="2.700" /><circle cx="20" cy="2" r="5.500" /></svg>
        <ScaleLabels><span>1.00</span><span>0.00</span></ScaleLabels>
      </SizeScale>
    </Legend>
    <Toast>
      <ToastText>26 metabolite(s) could not be mapped on the pathway dashboard</ToastText>
      <DownloadButton>Download List</DownloadButton>
      <svg width="8" height="8" viewBox="0 0 8 8" stroke="#ddccf6" strokeWidth="1.100"><path d="M0.500 0.500L7.500 7.500M7.500 0.500L0.500 7.500" /></svg>
    </Toast>
    <MapControls>
      <ZoomIn><svg width="14" height="14" stroke="#fff" strokeWidth="2"><path d="M7 2.500V11.500M2.500 7H11.500" /></svg></ZoomIn>
      <ResetButton>RESET</ResetButton>
    </MapControls>
    <ChatButton>
      <svg width="48" height="48" viewBox="0 0 48 48">
        <path d="M15 11H33Q35 11 35 13V37L29 34H15Q13 34 13 32V13Q13 11 15 11Z" fill="#fff" />
        <path d="M17 28Q24 33 31 28" fill="none" stroke={purple} strokeWidth="1.200" strokeLinecap="round" />
      </svg>
    </ChatButton>
  </Page>
);

export default App;
